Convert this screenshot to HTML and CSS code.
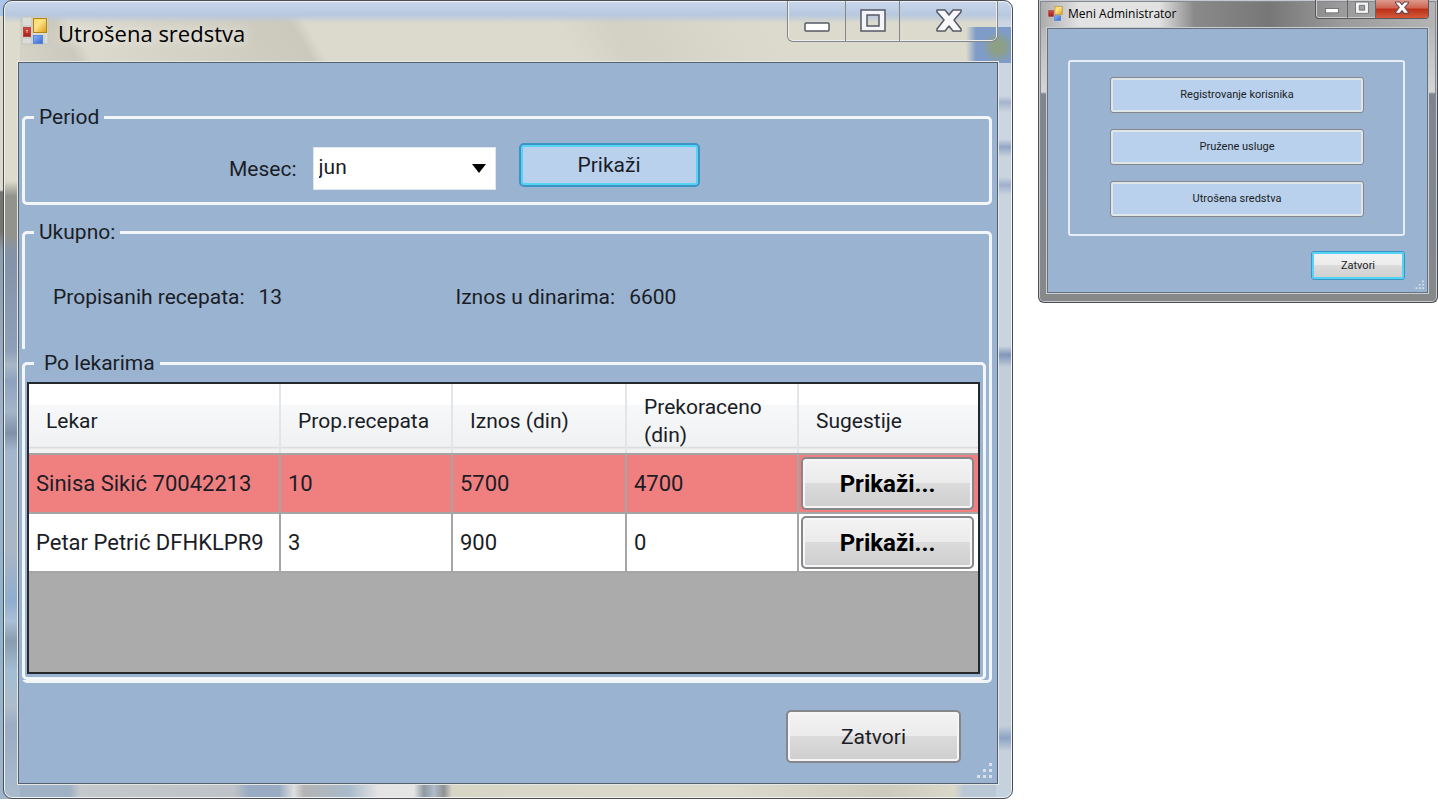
FILE: index.html
```html
<!DOCTYPE html>
<html lang="sr-Latn">
<head>
<meta charset="utf-8">
<title>Utrošena sredstva</title>
<link rel="stylesheet" href="styles.css">
</head>
<body>
<main class="desktop">
  <div class="backdrop">
    <section class="window window-large">
      <header class="titlebar">
        <svg class="app-icon" viewBox="0 0 28 29" aria-hidden="true">
          <defs>
            <linearGradient id="gold" x2="1" y2="1"><stop offset="0" stop-color="#ffd84a"/><stop offset=".4" stop-color="#ffe28a"/><stop offset="1" stop-color="#dba010"/></linearGradient>
            <linearGradient id="red" x2="0" y2="1"><stop offset="0" stop-color="#d9493c"/><stop offset="1" stop-color="#a51c14"/></linearGradient>
            <linearGradient id="blue" x2="1" y2="1"><stop offset="0" stop-color="#8ab8f8"/><stop offset="1" stop-color="#3465cf"/></linearGradient>
          </defs>
          <path d="M1 1h26v27H1zM11 1v27M1 10h10M1 22h10M23 19v9" fill="#dcdcd6" stroke="#c2c2c0"/>
          <rect x="12.500" y="2.500" width="13" height="14" fill="url(#gold)" stroke="#b08416"/>
          <rect x="2.500" y="11.500" width="7" height="9" fill="url(#red)" stroke="#b0483e"/>
          <rect x="12.500" y="19.500" width="9" height="8" fill="url(#blue)" stroke="#5c86d8"/>
          <path d="M6 14v3M5 14.500h2" stroke="#f3b0a4"/>
        </svg>
        <h1 class="title">Utrošena sredstva</h1>
        <div class="caption">
          <button class="cap cap-min" type="button" aria-label="Umanji"><svg viewBox="0 0 26 26"><rect x="1" y="15" width="24" height="8" rx="1" fill="#fff" stroke="#555866" stroke-width="1.500"/></svg></button>
          <button class="cap cap-max" type="button" aria-label="Uvećaj"><svg viewBox="0 0 26 26"><path d="M1 2h24v21H1zM7 7v11h12V7z" fill="#f4f5f8" fill-rule="evenodd" stroke="#555866" stroke-width="1.500"/></svg></button>
          <button class="cap cap-close" type="button" aria-label="Zatvori prozor"><svg viewBox="0 0 26 26"><path d="M1 2h8l4 5 4-5h8v2l-7 8 7 9v2h-8l-4-5-4 5H1v-2l7-9-7-8z" fill="#f8f8fa" stroke="#555866" stroke-width="1.500" stroke-linejoin="round"/></svg></button>
        </div>
      </header>
      <form class="client">
        <fieldset class="group group-period">
          <legend>Period</legend>
          <div class="period-row">
            <label for="mesec">Mesec:</label>
            <span class="combo">
              <select id="mesec"><option>jun</option></select>
              <svg class="combo-arrow" viewBox="0 0 16 9" aria-hidden="true"><path d="M1 0h14L8 9z"/></svg>
            </span>
            <button class="btn btn-blue btn-focus" type="button">Prikaži</button>
          </div>
        </fieldset>
        <fieldset class="group group-total">
          <legend>Ukupno:</legend>
          <div class="totals">
            <p class="total"><span>Propisanih recepata:</span><span>13</span></p>
            <p class="total"><span>Iznos u dinarima:</span><span>6600</span></p>
          </div>
          <div class="inner">
            <fieldset class="group group-doctors">
              <legend>Po lekarima</legend>
              <div class="grid-box">
                <table class="grid">
                  <colgroup><col class="c-doctor"><col class="c-count"><col class="c-amount"><col class="c-over"><col></colgroup>
                  <thead>
                    <tr><th>Lekar</th><th>Prop.recepata</th><th>Iznos (din)</th><th>Prekoraceno (din)</th><th>Sugestije</th></tr>
                  </thead>
                  <tbody>
                    <tr class="over"><td>Sinisa Sikić 70042213</td><td>10</td><td>5700</td><td>4700</td><td class="action"><button class="btn btn-cell" type="button">Prikaži...</button></td></tr>
                    <tr><td>Petar Petrić DFHKLPR9</td><td>3</td><td>900</td><td>0</td><td class="action"><button class="btn btn-cell" type="button">Prikaži...</button></td></tr>
                  </tbody>
                </table>
              </div>
            </fieldset>
          </div>
        </fieldset>
        <div class="footer"><button class="btn btn-close" type="button">Zatvori</button></div>
        <svg class="grip" viewBox="0 0 18 18" aria-hidden="true"><path d="M13 1h3v3h-3zM7 7h3v3H7zM13 7h3v3h-3zM1 13h3v3H1zM7 13h3v3H7zM13 13h3v3h-3z"/></svg>
      </form>
    </section>
  </div>

  <section class="window window-small">
    <header class="titlebar">
      <svg class="app-icon" viewBox="0 0 28 29" aria-hidden="true">
        <rect x="13" y="1" width="14" height="15" fill="url(#gold)" stroke="#b08416"/>
        <rect x="1" y="9" width="9" height="11" fill="url(#red)" stroke="#9c2a20"/>
        <rect x="12" y="19" width="12" height="9" fill="url(#blue)" stroke="#4a75cf"/>
      </svg>
      <h2 class="title">Meni Administrator</h2>
      <div class="caption">
        <button class="cap cap-min" type="button" aria-label="Umanji"><svg viewBox="0 0 26 26"><rect x="1" y="14" width="24" height="8" fill="#fff" stroke="#666" stroke-width="1.500"/></svg></button>
        <button class="cap cap-max" type="button" aria-label="Uvećaj"><svg viewBox="0 0 26 26"><path d="M1 2h24v21H1zM8 8v9h10V8z" fill="#f4f5f8" fill-rule="evenodd" stroke="#666" stroke-width="1.500"/></svg></button>
        <button class="cap cap-close" type="button" aria-label="Zatvori prozor"><svg viewBox="0 0 26 26"><path d="M1 2h8l4 5 4-5h8v2l-7 8 7 9v2h-8l-4-5-4 5H1v-2l7-9-7-8z" fill="#fff" stroke="#6b4a50" stroke-width="2" stroke-linejoin="round"/></svg></button>
      </div>
    </header>
    <div class="client">
      <div class="menu">
        <button class="btn btn-blue" type="button">Registrovanje korisnika</button>
        <button class="btn btn-blue" type="button">Pružene usluge</button>
        <button class="btn btn-blue" type="button">Utrošena sredstva</button>
      </div>
      <div class="footer"><button class="btn btn-focus btn-close" type="button">Zatvori</button></div>
      <svg class="grip" viewBox="0 0 18 18" aria-hidden="true"><path d="M13 1h3v3h-3zM7 7h3v3H7zM13 7h3v3h-3zM1 13h3v3H1zM7 13h3v3H7zM13 13h3v3h-3z"/></svg>
    </div>
  </section>
</main>
</body>
</html>
```

FILE: styles.css
```css
* { box-sizing: border-box; }

body {
  margin: 0;
  background: #fff;
  color: #1b1d26;
  font-family: Roboto, "Liberation Sans", sans-serif;
}

h1, h2, p { margin: 0; font-weight: 400; }

button, select { font: inherit; color: inherit; }

.desktop {
  display: grid;
  grid-template-columns: minmax(0, 1013fr) minmax(0, 400fr);
  column-gap: 25px;
  align-items: start;
}

.backdrop {
  padding-left: 3px;
  background:
    linear-gradient(#fff, #fff) right / 20px 100% no-repeat,
    linear-gradient(#a9c6ea 0 16px, #dcdacb 16px 190px, #77776f 192px 232px, #8a9cb0 250px, #9db4cc 420px, #8fb3cc 600px, #9fb4cb);
}

.window {
  display: flex;
  flex-direction: column;
  border: 1px solid #4b4d52;
}

.titlebar { display: flex; align-items: flex-start; }

.title {
  flex: 1;
  color: #000;
  font-family: "Open Sans", "Noto Sans", sans-serif;
  white-space: nowrap;
}

.caption { display: flex; }

.cap {
  display: flex;
  align-items: center;
  justify-content: center;
  margin: 0;
  padding: 0;
  border: 0;
  background: none;
}

.client {
  position: relative;
  background: #99b3d1;
}

.footer { display: flex; justify-content: flex-end; }

.grip { position: absolute; fill: #d9e2ea; }

.btn {
  border: 2px solid #85878b;
  border-radius: 5px;
  padding: 0;
  background: linear-gradient(#f3f3f3, #ebebeb 48%, #dbdbdb 50%, #cecece);
  box-shadow: inset 0 0 0 2px #f6f6f6;
}

.btn-blue { background: #b9d1ec; box-shadow: inset 0 0 0 2px #dfe6ea; }

.btn-focus { border-color: #3c93c4; box-shadow: inset 0 0 0 2px #54d3f5; }

/* Large window */

.window-large {
  border-radius: 9px;
  font-size: 21px;
  line-height: 28px;
  box-shadow: inset 0 0 0 1px #eef2f5;
  background:
    radial-gradient(circle at 994px 46px, #8d9f85 0 6px, transparent 16px),
    linear-gradient(90deg, transparent, #7f9cc8 10px) right 0 top 26px / 46px 36px no-repeat,
    linear-gradient(#c9d7eb, #b7c8df 14px, transparent 22px) top / 100% 62px no-repeat,
    linear-gradient(#ccd6e2 0 95px, #a5b4cd 101px, #ccd6e2 112px 138px, #93a5c6 146px, #c9d4df 156px 176px, #a0b0cd 184px, #c9d4df 194px 345px, #8095ba 354px, #c2ced9 366px 725px, #8ca3c4 737px, #c5d1dd 750px) right / 16px 100% no-repeat,
    linear-gradient(#dddbcd 0 180px, #93938d 195px 235px, #8492a8 250px, #8e9fb8 350px, #a9b7c5 364px, #8fa1bf 380px, #a4b5c8 410px, #7e91a8 432px, #a3b6cb 450px, #a9b6c4 550px, #8fadce 600px, #abbfd5 620px, #8a9caf 640px, #a3bdd2 670px, #aebccb 705px, #9bacc3 725px, #a9bbcc) left / 16px 100% no-repeat,
    linear-gradient(90deg, #9fb1c4 0 66px, #c5c8cb 76px, #bfc2c6 230px, #98abc2 245px 275px, #dedede 290px, #b4b4b4 300px, #a9bacb 345px, #e4e4e4 375px 410px, #8f98a2 420px, #b0bcc8 430px, #8f9294 440px, #d7d6c5 448px, #dbd9cb 730px, #cccabd 880px, #d9d7c8 950px, #bac7d5 960px) bottom / 100% 16px no-repeat,
    linear-gradient(60deg, #e0dfd2 0 26%, #cbc9bd 34%, #dbd9cc 35%, #cbc9bc 50%, #dcdacd 51% 68%, #d3d1c4 72%, #dcdacc 82%) #dcdacc;
}

.window-large .titlebar { height: 61px; padding: 0 14px 0 17px; }

.window-large .app-icon { width: 28px; height: 29px; margin: 15px 9px 0 0; }

.window-large .title {
  margin-top: 16px;
  font-size: 22px;
  line-height: 32px;
  text-shadow: 0 0 12px #fff;
}

.window-large .caption {
  height: 41px;
  border: 1px solid #85868a;
  border-top: 0;
  border-radius: 0 0 6px 6px;
  box-shadow: inset 0 0 0 1px #eceef0;
}

.window-large .cap svg { width: 26px; height: 26px; }
.window-large .cap-min { width: 57px; }
.window-large .cap-max { width: 55px; border-left: 1px solid #85868a; border-right: 1px solid #85868a; }
.window-large .cap-close { width: 97px; }

.window-large .client {
  margin: 0 14px 14px;
  padding: 40px 5px 20px 3px;
  border: 1px solid #55606f;
  box-shadow: 0 0 0 1px #e6e8e6;
}

.group {
  min-width: 0;
  margin: 0;
  padding: 0;
  border: 3px solid #f3f6f9;
  border-radius: 5px;
}

.group legend { margin-left: 9px; padding: 0 5px; }

.period-row {
  display: flex;
  align-items: flex-start;
  padding: 12px 0 12px 204px;
}

.period-row label { padding-top: 12px; }

.combo { position: relative; width: 183px; margin: 4px 23px 0 16px; }

.combo select {
  display: block;
  width: 100%;
  height: 43px;
  padding: 0 0 4px 5px;
  border: 1px solid #dfe6ee;
  border-radius: 0;
  background: #fff;
  appearance: none;
}

.combo-arrow {
  position: absolute;
  top: 17px;
  right: 9px;
  width: 16px;
  height: 9px;
  pointer-events: none;
}

.period-row .btn { width: 181px; height: 44px; }

.group-total { margin-top: 13px; }

.totals { display: flex; padding: 37px 0 38px 28px; }

.total { display: flex; flex: 0 0 43%; gap: 14px; }

.inner {
  position: relative;
  margin: 0 3px 0 -3px;
  background: #99b3d1;
}

.group-doctors legend { margin-left: 9px; padding: 0 5px 0 10px; }

.grid-box {
  min-height: 292px;
  margin: 5px 3px 3px 2px;
  border: 2px solid #24272b;
  background: #ababab;
}

.grid {
  width: 100%;
  border-collapse: collapse;
  table-layout: fixed;
}

.c-doctor { width: 251px; }
.c-count { width: 172px; }
.c-amount { width: 174px; }
.c-over { width: 172px; }

.grid th {
  height: 70px;
  padding: 4px 8px 0 17px;
  border-right: 2px solid #e4e5e7;
  border-bottom: 2px solid #a5a5a5;
  background: linear-gradient(#fff 0 30%, #f7f8fa 31%, #f0f1f3 90%, #dcdddf 92%, #f2f2f2 95%);
  font-weight: 400;
  text-align: left;
}

.grid td {
  height: 59px;
  padding: 0 0 0 7px;
  border-right: 2px solid #a5a5a5;
  border-bottom: 2px solid #a5a5a5;
  background: #fff;
  font-size: 22px;
  white-space: nowrap;
}

.grid .over td { background: #f08080; }

.grid th:last-child, .grid td:last-child { border-right: 0; }

.grid .action { padding: 0 4px 0 2px; }

.btn-cell { display: block; width: 100%; height: 53px; color: #000; font-size: 24px; font-weight: 700; }

.window-large .footer { padding: 27px 31px 0 0; }
.window-large .btn-close { width: 175px; height: 53px; }
.window-large .grip { right: 3px; bottom: 3px; width: 18px; height: 18px; }

/* Small window */

.window-small {
  border-top: 0;
  border-radius: 0 0 6px 6px;
  font-size: 11px;
  line-height: 16px;
  box-shadow: inset 0 0 0 1px #c5c8cc, inset 0 0 0 2px #858a90;
  background:
    linear-gradient(90deg, #aaa, #e2e2e2 40px 120px, transparent 155px) top / 100% 28px no-repeat,
    linear-gradient(90deg, #8b8b8b 150px, #777 230px, #9a9a9a 300px, #b5b5b5) top / 100% 28px no-repeat,
    linear-gradient(#aaa, #d5d5d5 92px, #7e858f 94px, #82878d 240px, #888);
}

.window-small .titlebar { height: 28px; padding: 0 8px 0 9px; }
.window-small .app-icon { width: 15px; height: 15px; margin: 6px 5px 0 0; }

.window-small .title { margin-top: 4px; font-size: 12px; line-height: 20px; }

.window-small .caption {
  height: 19px;
  border: 1px solid #56585c;
  border-top: 0;
  border-radius: 0 0 4px 4px;
  box-shadow: inset 0 0 0 1px #ccc;
}

.window-small .cap { padding-bottom: 2px; }
.window-small .cap svg { width: 14px; height: 14px; }
.window-small .cap-min { width: 31px; }
.window-small .cap-max { width: 29px; border-left: 1px solid #666; border-right: 1px solid #666; }
.window-small .cap-close { width: 52px; border-radius: 0 0 3px 0; background: linear-gradient(#dc9a8c, #cf6250 45%, #bd2f18 50%, #d35a3a); }

.window-small .client {
  margin: 0 9px 9px 8px;
  padding: 31px 22px 12px 20px;
  border: 1px solid #67717e;
  box-shadow: 0 0 0 1px #c9ced4;
}

.menu {
  display: flex;
  flex-direction: column;
  gap: 16px;
  padding: 15px 39px 17px 40px;
  border: 2px solid #e6edf4;
  border-radius: 3px;
}

.window-small .btn { height: 36px; border-radius: 3px; border-width: 1px; }
.window-small .footer { padding-top: 15px; }
.window-small .btn-close { width: 94px; height: 29px; }
.window-small .grip { right: 2px; bottom: 2px; width: 10px; height: 10px; }
```
